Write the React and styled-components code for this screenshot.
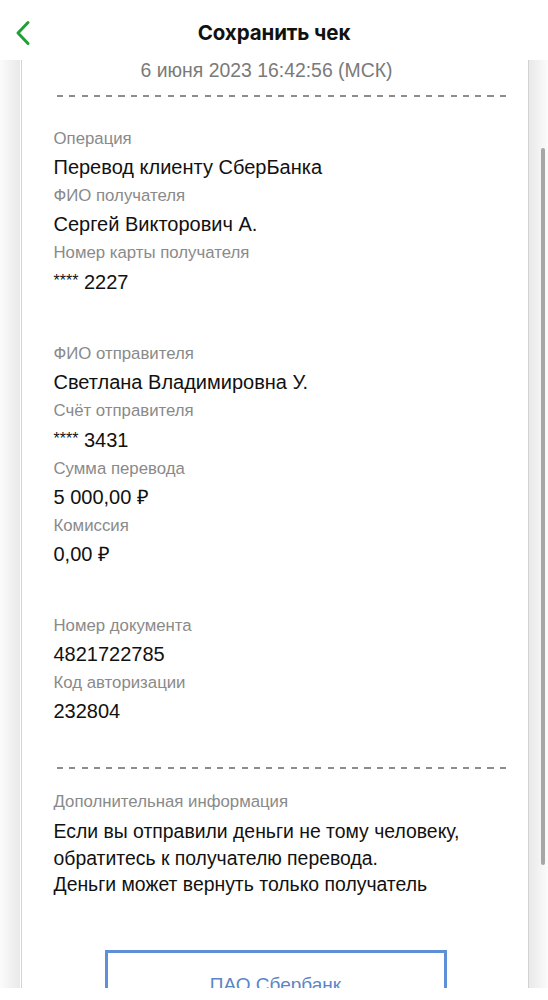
import React from 'react';
import styled, { createGlobalStyle } from 'styled-components';

const GlobalStyle = createGlobalStyle`
    html, body {
        margin: 0;
        padding: 0;
        background: #ffffff;
    }
    * {
        box-sizing: border-box;
    }
`;

const groups = [
    [
        { label: 'Операция', value: 'Перевод клиенту СберБанка' },
        { label: 'ФИО получателя', value: 'Сергей Викторович А.' },
        { label: 'Номер карты получателя', value: '**** 2227', masked: true },
    ],
    [
        { label: 'ФИО отправителя', value: 'Светлана Владимировна У.' },
        { label: 'Счёт отправителя', value: '**** 3431', masked: true },
        { label: 'Сумма перевода', value: '5 000,00 ₽' },
        { label: 'Комиссия', value: '0,00 ₽' },
    ],
    [
        { label: 'Номер документа', value: '4821722785' },
        { label: 'Код авторизации', value: '232804' },
    ],
];

const BackIcon = () => (
    <svg width="16" height="26" viewBox="0 0 16 26" fill="none">
        <path d="M13 2.5L3 13l10 10.5" stroke="#21a038" strokeWidth="3" strokeLinecap="round" strokeLinejoin="round" />
    </svg>
);

const Value = ({ text, masked }) => {
    if (!masked) return <ValueText>{text}</ValueText>;
    const [stars, rest] = text.split(' ');
    return (
        <ValueText>
            <Stars>{stars}</Stars> {rest}
        </ValueText>
    );
};

const App = () => (
    <Page>
        <GlobalStyle />
        <Header>
            <BackButton><BackIcon /></BackButton>
            <Title>Сохранить чек</Title>
        </Header>
        <Body>
            <Card>
                <DateLine>6 июня 2023 16:42:56 (МСК)</DateLine>
                <Dashes top={15} />
                {groups.map((group, i) => (
                    <Group key={i} first={i === 0}>
                        {group.map(row => (
                            <React.Fragment key={row.label}>
                                <Label>{row.label}</Label>
                                <Value text={row.value} masked={row.masked} />
                            </React.Fragment>
                        ))}
                    </Group>
                ))}
                <Dashes top={42} />
                <InfoBlock>
                    <Label>Дополнительная информация</Label>
                    <InfoText>
                        Если вы отправили деньги не тому человеку,<br />
                        обратитесь к получателю перевода.<br />
                        Деньги может вернуть только получатель
                    </InfoText>
                </InfoBlock>
                <Stamp>ПАО Сбербанк</Stamp>
            </Card>
            <ScrollThumb />
        </Body>
        <Footer />
    </Page>
);

const Page = styled.div`
    width: 548px;
    height: 1000px;
    display: flex;
    flex-direction: column;
    overflow: hidden;
    background: #ffffff;
`;

const Header = styled.div`
    height: 60px;
    flex-shrink: 0;
    display: flex;
    align-items: center;
    justify-content: center;
    position: relative;
    background: #ffffff;
    z-index: 2;
`;

const BackButton = styled.div`
    position: absolute;
    left: 15px;
    top: 20px;
    display: flex;
`;

const Title = styled.div`
    font-family: Inter, "Open Sans", sans-serif;
    font-weight: 700;
    font-size: 20.5px;
    color: #111111;
    margin-top: 5px;
    letter-spacing: -0.1px;
`;

const Body = styled.div`
    flex: 1;
    position: relative;
    overflow: hidden;
    display: flex;
    justify-content: center;
    background: linear-gradient(to right, #fbfbfb 0px, #e9e9e9 20px, #ffffff 20px, #ffffff 528px, #e9e9e9 529px, #fbfbfb 548px);
`;

const Card = styled.div`
    width: 508px;
    margin-left: 1px;
    background: #ffffff;
    border-left: 1px solid #d2d2d2;
    border-right: 1px solid #d2d2d2;
    padding: 0 16px 0 32px;
    font-family: "Liberation Sans", Arial, sans-serif;
`;

const DateLine = styled.div`
    text-align: center;
    font-size: 19.4px;
    line-height: 20px;
    color: #7a7a7a;
    padding-right: 32px;
`;

const Dashes = styled.div`
    margin-top: ${({ top }) => top}px;
    height: 2px;
    margin-left: 3px;
    background-image: repeating-linear-gradient(to right, #8c8c8c 0 6px, transparent 6px 12.3px);
`;

const Group = styled.div`
    margin-top: ${({ first }) => (first ? 27 : 43)}px;
    display: flex;
    flex-direction: column;
`;

const Label = styled.div`
    font-size: 16.8px;
    line-height: 29px;
    color: #8a8a8a;
`;

const ValueText = styled.div`
    font-size: 20px;
    line-height: 28px;
    color: #111111;
`;

const Stars = styled.span`
    font-size: 16px;
    vertical-align: 3px;
`;

const InfoBlock = styled.div`
    margin-top: 18px;
`;

const InfoText = styled.div`
    margin-top: 2px;
    font-size: 19.4px;
    line-height: 26.5px;
    color: #111111;
`;

const Stamp = styled.div`
    margin: 52px 0 0 51px;
    width: 342px;
    height: 120px;
    border: 3px solid #5f8fd6;
    color: #5a86c8;
    font-size: 19px;
    line-height: 22px;
    text-align: center;
    padding-top: 21px;
`;

const ScrollThumb = styled.div`
    position: absolute;
    right: 3px;
    top: 88px;
    width: 4px;
    height: 717px;
    border-radius: 2px;
    background: #a6a6a6;
`;

const Footer = styled.div`
    height: 12px;
    flex-shrink: 0;
    background: #ffffff;
`;

export default App;
